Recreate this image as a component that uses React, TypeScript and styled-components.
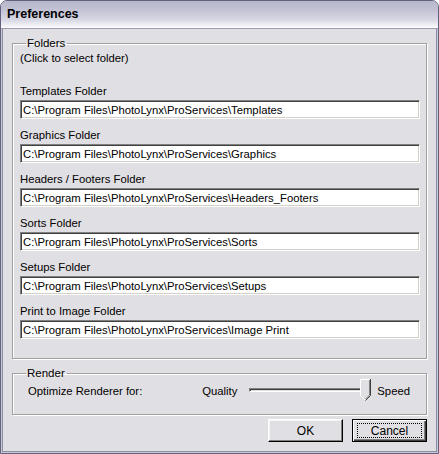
import React from 'react';
import styled, { createGlobalStyle } from 'styled-components';

const GlobalStyle = createGlobalStyle`
  html, body {
    margin: 0;
    padding: 0;
    background: #ffffff;
  }
  * {
    box-sizing: border-box;
  }
`;

const Window = styled.div`
  width: 439px;
  height: 454px;
  background: #e0dfe3;
  border: 1px solid #62617e;
  border-radius: 7px 7px 0 0;
  box-shadow: inset 1px 0 #c8c8d6, inset -1px 0 #c8c8d6, inset 0 -1px #c8c8d6;
  display: flex;
  flex-direction: column;
  overflow: hidden;
  font-family: "Liberation Sans", Arial, sans-serif;
  font-size: 11.3px;
  color: #000;
`;

const TitleBar = styled.div`
  height: 28px;
  flex: none;
  display: flex;
  align-items: center;
  padding: 0 0 1px 6px;
  background: linear-gradient(#b7b7cb 0%, #c3c3d5 35%, #d8d8e4 70%, #f2f2f6 92%, #ffffff 100%);
  border-bottom: 1px solid #9c9bb2;
  font-weight: bold;
  font-size: 12.5px;
  color: #000;
`;

const Body = styled.div`
  flex: 1;
  display: flex;
  flex-direction: column;
  padding: 8px 9px 0 9px;
  margin: 0 1px 1px 1px;
  border-left: 1px solid #8e8da6;
  border-right: 1px solid #8e8da6;
  border-bottom: 1px solid #8e8da6;
`;

const Group = styled.fieldset<{ $pad: string; $gap?: number }>`
  margin: ${p => p.$gap ?? 0}px 0 0 0;
  padding: ${p => p.$pad};
  border: 1px solid #a0a0a0;
  box-shadow: 1px 1px 0 #ffffff, inset 1px 1px 0 #ffffff;
  border-radius: 0;
  min-width: 0;
`;

const Legend = styled.legend`
  padding: 0 2px 0 1px;
  margin-left: 6px;
  font-size: 11.5px;
`;

const Text = styled.div`
  line-height: 14px;
  white-space: nowrap;
`;

const Hint = styled(Text)`
  margin: 2px 0 19px 0;
`;

const Field = styled.div`
  display: flex;
  flex-direction: column;
  gap: 2px;
  margin-bottom: 9px;
`;

const PathBox = styled.div`
  height: 19px;
  width: 400px;
  background: #ffffff;
  border-top: 1px solid #808080;
  border-left: 1px solid #808080;
  border-right: 1px solid #ffffff;
  border-bottom: 1px solid #ffffff;
  box-shadow: inset 1px 1px 0 #404040, inset -1px -1px 0 #d4d0c8;
  padding: 2px 0 0 2px;
  line-height: 14px;
  white-space: nowrap;
  overflow: hidden;
`;

const RenderRow = styled.div`
  display: flex;
  align-items: center;
  height: 24px;
  padding-left: 8px;
`;

const Spacer = styled.div`
  flex: 1;
`;

const SliderWrap = styled.div`
  position: relative;
  width: 122px;
  height: 24px;
  margin: 0 6px 0 12px;
`;

const Track = styled.div`
  position: absolute;
  left: 0;
  right: 0;
  top: 9px;
  height: 4px;
  border-top: 1px solid #808080;
  border-left: 1px solid #808080;
  border-bottom: 1px solid #ffffff;
  border-right: 1px solid #ffffff;
  box-shadow: inset 1px 1px 0 #404040;
  background: #e0dfe3;
`;

const Thumb = styled.svg`
  position: absolute;
  top: 0;
  right: 0;
`;

const Buttons = styled.div`
  display: flex;
  justify-content: flex-end;
  gap: 9px;
  margin-top: 4px;
`;

const Button = styled.div<{ $default?: boolean }>`
  width: 75px;
  height: 23px;
  display: flex;
  align-items: center;
  justify-content: center;
  background: #e0dfe3;
  border: 1px solid ${p => (p.$default ? '#000000' : '#ffffff')};
  border-right-color: #000000;
  border-bottom-color: #000000;
  box-shadow: ${p =>
    p.$default
      ? 'inset 1px 1px 0 #ffffff, inset -1px -1px 0 #404040, inset -2px -2px 0 #808080'
      : 'inset -1px -1px 0 #808080, inset 1px 1px 0 #f4f4f4'};
  font-size: 12px;
`;

const Focus = styled.span`
  display: flex;
  align-items: center;
  justify-content: center;
  width: 65px;
  height: 15px;
  border: 1px dotted #000;
`;

const folders = [
  ['Templates Folder', 'Templates'],
  ['Graphics Folder', 'Graphics'],
  ['Headers / Footers Folder', 'Headers_Footers'],
  ['Sorts Folder', 'Sorts'],
  ['Setups Folder', 'Setups'],
  ['Print to Image Folder', 'Image Print'],
];

export default function App() {
  return (
    <>
      <GlobalStyle />
      <Window>
        <TitleBar>Preferences</TitleBar>
        <Body>
          <Group $pad="0 0 10px 7px">
            <Legend>Folders</Legend>
            <Hint>(Click to select folder)</Hint>
            {folders.map(([label, dir]) => (
              <Field key={label}>
                <Text>{label}</Text>
                <PathBox>C:\Program Files\PhotoLynx\ProServices\{dir}</PathBox>
              </Field>
            ))}
          </Group>
          <Group $pad="0 0 11px 7px" $gap={8}>
            <Legend>Render</Legend>
            <RenderRow>
              <Text>Optimize Renderer for:</Text>
              <Spacer />
              <Text>Quality</Text>
              <SliderWrap>
                <Track />
                <Thumb width="11" height="22" viewBox="0 0 11 22">
                  <path d="M0.5 0.5 H10.5 V16.5 L5.5 21.5 L0.5 16.5 Z" fill="#e0dfe3" />
                  <path d="M0.5 17 V0.5 H10" fill="none" stroke="#ffffff" />
                  <path d="M10.5 0 V16.5 L5.5 21.5" fill="none" stroke="#404040" />
                  <path d="M9.5 1 V16 L5.5 20" fill="none" stroke="#808080" />
                  <path d="M0.5 16.5 L5 21" fill="none" stroke="#ffffff" />
                </Thumb>
              </SliderWrap>
              <Text style={{ marginRight: 16 }}>Speed</Text>
            </RenderRow>
          </Group>
          <Buttons>
            <Button>OK</Button>
            <Button $default>
              <Focus>Cancel</Focus>
            </Button>
          </Buttons>
        </Body>
      </Window>
    </>
  );
}
